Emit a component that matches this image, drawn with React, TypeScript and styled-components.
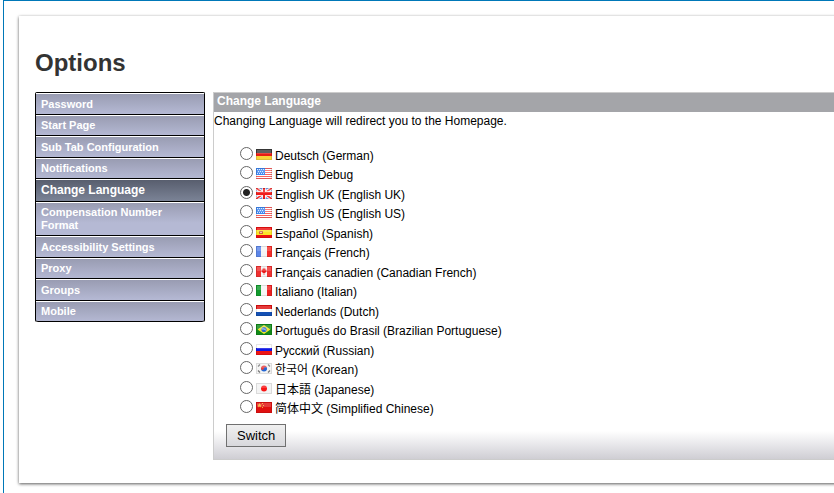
import React, { useState } from "react";
import styled, { createGlobalStyle } from "styled-components";

const GlobalStyle = createGlobalStyle`
  *, *::before, *::after { box-sizing: border-box; }
  html { background: #fff; }
  body {
    margin: 0;
    color: #000;
    font-family: "Liberation Sans", Arial, "Noto Sans CJK SC", sans-serif;
    font-size: 12px;
    line-height: 14px;
    overflow: hidden;
  }
`;

const Frame = styled.div`
  min-height: 100vh;
  margin-left: 3px;
  padding: 15px 0 9px 15px;
  border-top: 1px solid #0078b8;
  border-left: 1px solid #0078b8;
`;

const Card = styled.main`
  padding: 33px 0 23px 16px;
  background: #fff;
  box-shadow: 0 1px 3px rgba(0, 0, 0, 0.65);
  margin-right: -8px;
`;

const Title = styled.h1`
  margin: 0 0 15px;
  color: #333;
  font-size: 24px;
  line-height: 28px;
  font-weight: bold;
`;

const Columns = styled.div`
  display: flex;
  align-items: flex-start;
  gap: 8px;
`;

const Menu = styled.nav`
  flex: 0 0 170px;
  border: 1px solid #000;
  border-bottom: 0;
  border-radius: 2px;
`;

const MenuItem = styled.a<{ $current?: boolean }>`
  display: block;
  padding: ${(p) => (p.$current ? "3px 32px 4px 5px" : "4px 32px 3px 5px")};
  border-top: 1px solid #fff;
  border-bottom: 1px solid #000;
  background: ${(p) =>
    p.$current
      ? "linear-gradient(#585e6e, #7b8396)"
      : "linear-gradient(#999cb2, #b5b9d4 20px)"};
  color: #fff;
  font-size: ${(p) => (p.$current ? 12 : 11)}px;
  line-height: ${(p) => (p.$current ? 14 : 13)}px;
  font-weight: bold;
  text-decoration: none;

  &:nth-child(even) { padding-top: 3px; padding-bottom: 3px; }
  &:last-child { border-radius: 0 0 2px 2px; }
`;

const Panel = styled.form`
  flex: 1;
  min-width: 0;
  padding-bottom: 12px;
  border: 1px solid #ccc;
  border-right: 0;
  background: linear-gradient(to top, #cfced4, #fff 28px);
`;

const PanelTitle = styled.h2`
  margin: 0;
  padding: 1px 3px 3px;
  background: #a4a5a9;
  color: #fff;
  font-size: 12px;
  line-height: 15px;
  font-weight: bold;
`;

const Intro = styled.p`
  margin: 0;
  padding-top: 2px;
`;

const Languages = styled.fieldset`
  margin: 19px 0 0;
  padding: 0 0 0 26px;
  border: 0;
`;

const Language = styled.label`
  display: flex;
  align-items: flex-start;
  height: 19px;

  &:nth-child(even) { height: 20px; }
`;

const Radio = styled.input`
  appearance: none;
  flex: none;
  width: 13px;
  height: 13px;
  margin: 0 3px 0 0;
  border: 1px solid #666;
  border-radius: 50%;
  background: #fff;

  &:checked { background: radial-gradient(circle, #222 3px, #fff 4px); }
`;

const FlagIcon = styled.svg`
  flex: none;
  width: 16px;
  height: 11px;
  margin: 2px 3px 0 0;
`;

const LanguageName = styled.span`
  padding-top: 2px;
  white-space: nowrap;
`;

const SwitchButton = styled.button`
  display: block;
  margin: 4px 0 0 12px;
  padding: 3px 10px;
  border: 1px solid #707070;
  border-radius: 0;
  background: linear-gradient(#f0f0f0, #d8d8dc);
  color: #000;
  font-family: inherit;
  font-size: 13px;
  line-height: 15px;
`;

const menuItems = [
  "Password",
  "Start Page",
  "Sub Tab Configuration",
  "Notifications",
  "Change Language",
  "Compensation Number Format",
  "Accessibility Settings",
  "Proxy",
  "Groups",
  "Mobile",
];

const horizontal = (a: string, b: string, c: string) => (
  <>
    <path fill={a} d="M0 0h16v4H0z" />
    <path fill={b} d="M0 4h16v3H0z" />
    <path fill={c} d="M0 7h16v4H0z" />
  </>
);

const vertical = (a: string, b: string, c: string) => (
  <>
    <path fill={a} d="M0 0h5v11H0z" />
    <path fill={b} d="M5 0h6v11H5z" />
    <path fill={c} d="M11 0h5v11h-5z" />
  </>
);

const usFlag = (
  <>
    <path fill="#fff" d="M0 0h16v11H0z" />
    <path
      fill="#f86060"
      d="M0 0h16v1H0zM0 2h16v1H0zM0 4h16v1H0zM0 6h16v1H0zM0 8h16v1H0zM0 10h16v1H0z"
    />
    <path fill="#3f86f0" d="M0 0h9v7H0z" />
    <path
      fill="#d4e8ff"
      d="M1 1h1v1H1zM3 1h1v1H3zM5 1h1v1H5zM7 1h1v1H7zM2 3h1v1H2zM4 3h1v1H4zM6 3h1v1H6zM1 5h1v1H1zM3 5h1v1H3zM5 5h1v1H5zM7 5h1v1H7z"
    />
  </>
);

const flags: Record<string, React.ReactNode> = {
  de: horizontal("#3c3c3c", "#e81c14", "#f9d43a"),
  us: usFlag,
  gb: (
    <>
      <path fill="#7c9cec" d="M0 0h16v11H0z" />
      <path stroke="#fff" strokeWidth="3.400" d="M0 0l16 11M16 0L0 11" />
      <path stroke="#f43434" strokeWidth="1.500" d="M0 0l16 11M16 0L0 11" />
      <path fill="#fff" fillOpacity=".75" d="M6 0h1v11H6zM9 0h1v11H9zM0 3h16v1H0zM0 7h16v1H0z" />
      <path fill="#f01c1c" d="M7 0h2v11H7zM0 4h16v3H0z" />
    </>
  ),
  es: (
    <>
      <path fill="#ee1010" d="M0 0h16v11H0z" />
      <path fill="#fbe428" d="M0 3h16v5H0z" />
      <path fill="#d06a3a" d="M3 4h4v3H3z" />
      <path fill="#f4c9b0" d="M4 5h2v1H4z" />
    </>
  ),
  fr: vertical("#5c86e8", "#f4f4f4", "#f42c28"),
  ca: (
    <>
      {vertical("#f03030", "#f6f6f6", "#f03030")}
      <path
        fill="#e81c1c"
        d="M8 1.500l.8 1.400.9-.3-.2 1.500 1.200-.3-.3 1 .5.500-2 1.700h-.6v2h-.6V7h-.6l-2-1.700.5-.5-.3-1 1.200.3-.2-1.500.9.300z"
      />
    </>
  ),
  it: vertical("#109a2c", "#f6f6f6", "#ee2020"),
  nl: horizontal("#e01010", "#fff", "#1450b4"),
  br: (
    <>
      <path fill="#108a18" d="M0 0h16v11H0z" />
      <path fill="#f3e42b" d="M8 1l6.500 4.500L8 10 1.500 5.500z" />
      <circle cx="8" cy="5.500" r="2.600" fill="#2c6cc8" />
      <path stroke="#d9e6ff" strokeWidth=".8" fill="none" d="M5.600 5q2.600-.6 4.600 1.300" />
    </>
  ),
  ru: horizontal("#fff", "#1018e4", "#ee1414"),
  kr: (
    <>
      <path fill="#f4f4f4" d="M0 0h16v11H0z" />
      <path fill="#e83c3c" d="M5 5.500a3 3 0 0 1 6 0z" />
      <path fill="#2467d4" d="M5 5.500a3 3 0 0 0 6 0z" />
      <circle cx="6.500" cy="5.500" r="1.400" fill="#e83c3c" />
      <circle cx="9.500" cy="5.500" r="1.400" fill="#2467d4" />
      <path stroke="#777" strokeWidth="1.300" d="M2 3.500l2-2M12 1.500l2 2M2 7.500l2 2M12 9.500l2-2" />
    </>
  ),
  jp: (
    <>
      <path fill="#f3f3f3" d="M0 0h16v11H0z" />
      <circle cx="8" cy="5.500" r="3" fill="#f81414" />
    </>
  ),
  cn: (
    <>
      <path fill="#e01010" d="M0 0h16v11H0z" />
      <path fill="#f8b030" d="M3.500 1l.7 1.600 1.700.1-1.300 1.100.4 1.700-1.500-.9-1.500.9.400-1.700L1.100 2.700l1.700-.1zM6 1h1v1H6zM7 3h1v1H7zM6 5h1v1H6z" />
    </>
  ),
};

const languages = [
  { id: "de", flag: "de", name: "Deutsch (German)" },
  { id: "debug", flag: "us", name: "English Debug" },
  { id: "en-GB", flag: "gb", name: "English UK (English UK)" },
  { id: "en-US", flag: "us", name: "English US (English US)" },
  { id: "es", flag: "es", name: "Español (Spanish)" },
  { id: "fr", flag: "fr", name: "Français (French)" },
  { id: "fr-CA", flag: "ca", name: "Français canadien (Canadian French)" },
  { id: "it", flag: "it", name: "Italiano (Italian)" },
  { id: "nl", flag: "nl", name: "Nederlands (Dutch)" },
  { id: "pt-BR", flag: "br", name: "Português do Brasil (Brazilian Portuguese)" },
  { id: "ru", flag: "ru", name: "Русский (Russian)" },
  { id: "ko", flag: "kr", name: "한국어 (Korean)" },
  { id: "ja", flag: "jp", name: "日本語 (Japanese)" },
  { id: "zh-CN", flag: "cn", name: "简体中文 (Simplified Chinese)" },
];

function Flag({ code }: { code: string }) {
  return (
    <FlagIcon viewBox="0 0 16 11" aria-hidden="true">
      {flags[code]}
      <path fill="#fff" fillOpacity=".18" d="M1 1h14v4H1z" />
      <path fill="none" stroke="#000" strokeOpacity=".1" d="M.5.5h15v10H.5z" />
    </FlagIcon>
  );
}

export default function App() {
  const [selected, setSelected] = useState("en-GB");

  return (
    <>
      <GlobalStyle />
      <Frame>
        <Card>
          <Title>Options</Title>
          <Columns>
            <Menu aria-label="Options">
              {menuItems.map((item) => (
                <MenuItem
                  key={item}
                  href="#"
                  $current={item === "Change Language"}
                  aria-current={item === "Change Language" ? "page" : undefined}
                >
                  {item}
                </MenuItem>
              ))}
            </Menu>
            <Panel onSubmit={(e) => e.preventDefault()}>
              <PanelTitle>Change Language</PanelTitle>
              <Intro>Changing Language will redirect you to the Homepage.</Intro>
              <Languages aria-label="Language">
                {languages.map((l) => (
                  <Language key={l.id}>
                    <Radio
                      type="radio"
                      name="language"
                      value={l.id}
                      checked={selected === l.id}
                      onChange={() => setSelected(l.id)}
                    />
                    <Flag code={l.flag} />
                    <LanguageName lang={l.id === "debug" ? "en" : l.id}>{l.name}</LanguageName>
                  </Language>
                ))}
              </Languages>
              <SwitchButton type="submit">Switch</SwitchButton>
            </Panel>
          </Columns>
        </Card>
      </Frame>
    </>
  );
}
